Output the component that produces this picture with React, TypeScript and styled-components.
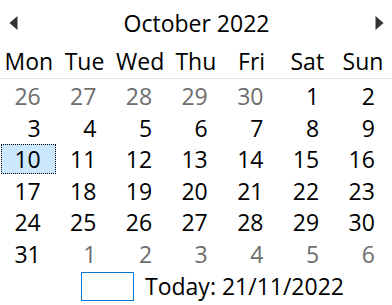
import React from 'react';
import styled, { createGlobalStyle } from 'styled-components';

const GlobalStyle = createGlobalStyle`
  html, body {
    margin: 0;
    padding: 0;
    background: #fff;
  }
  body {
    font-family: "Open Sans", "Noto Sans", "Liberation Sans", sans-serif;
  }
`;

const dayNames = ['Mon', 'Tue', 'Wed', 'Thu', 'Fri', 'Sat', 'Sun'];

// six weeks shown by the control, from Mon 26 Sep to Sun 6 Nov
const buildDays = () => {
  const days: { day: number; other: boolean }[] = [];
  for (let d = 26; d <= 30; d++) days.push({ day: d, other: true });
  for (let d = 1; d <= 31; d++) days.push({ day: d, other: false });
  for (let d = 1; d <= 6; d++) days.push({ day: d, other: true });
  return days;
};

const Arrow = ({ dir }: { dir: 'left' | 'right' }) => (
  <svg width="9" height="14" viewBox="0 0 9 14">
    {dir === 'left' ? (
      <polygon points="8.5,0 8.5,14 0.5,7" fill="#333" />
    ) : (
      <polygon points="0.5,0 0.5,14 8.5,7" fill="#333" />
    )}
  </svg>
);

const App = () => {
  const days = buildDays();
  return (
    <>
      <GlobalStyle />
      <Calendar>
        <Header>
          <NavButton>
            <Arrow dir="left" />
          </NavButton>
          <Title>October 2022</Title>
          <NavButton>
            <Arrow dir="right" />
          </NavButton>
        </Header>
        <DayNames>
          {dayNames.map((n) => (
            <DayName key={n}>{n}</DayName>
          ))}
        </DayNames>
        <Days>
          {days.map((d, i) => (
            <Day key={i} $other={d.other} $selected={!d.other && d.day === 10}>
              {d.day}
            </Day>
          ))}
        </Days>
        <Footer>
          <TodayBox />
          <TodayText>Today: 21/11/2022</TodayText>
        </Footer>
      </Calendar>
    </>
  );
};

export default App;

const Calendar = styled.div`
  width: 392px;
  height: 305px;
  background: #fff;
  color: #000;
  font-size: 23px;
  overflow: hidden;
`;

const Header = styled.div`
  display: flex;
  align-items: center;
  justify-content: space-between;
  height: 46px;
  padding: 0 8px 0 9px;
  box-sizing: border-box;
`;

const NavButton = styled.div`
  display: flex;
  align-items: center;
  width: 9px;
  height: 14px;
`;

const Title = styled.div`
  line-height: 1;
`;

const DayNames = styled.div`
  display: grid;
  grid-template-columns: repeat(7, 55.7px);
  margin: 0 1px 0 1px;
  padding-bottom: 1px;
  border-bottom: 1px solid #e3e3e3;
`;

const DayName = styled.div`
  text-align: center;
  height: 31px;
  line-height: 31px;
`;

const Days = styled.div`
  display: grid;
  grid-template-columns: repeat(7, 55.7px);
  grid-auto-rows: 31.5px;
  padding: 2px 0 0 1px;
`;

const Day = styled.div<{ $other: boolean; $selected: boolean }>`
  text-align: right;
  padding-right: 14px;
  line-height: 28px;
  height: 30px;
  box-sizing: border-box;
  color: ${(p) => (p.$other ? '#6d6d6d' : '#000')};
  background: ${(p) => (p.$selected ? '#cce8ff' : 'transparent')};
  border: 1px ${(p) => (p.$selected ? 'dotted #000' : 'solid transparent')};
  margin-right: 1px;
`;

const Footer = styled.div`
  display: flex;
  align-items: center;
  gap: 11px;
  padding-left: 81px;
  margin-top: 1px;
  height: 30px;
`;

const TodayBox = styled.div`
  width: 53px;
  height: 29px;
  box-sizing: border-box;
  border: 1px solid #0078d7;
`;

const TodayText = styled.div`
  line-height: 29px;
`;
